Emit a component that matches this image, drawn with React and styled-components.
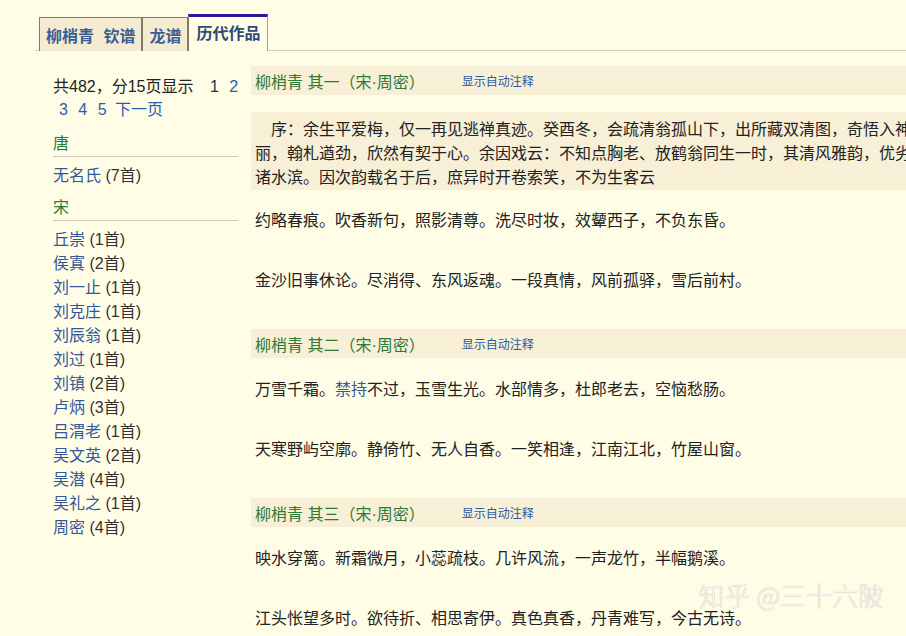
import React from 'react'
import styled, { createGlobalStyle } from 'styled-components'

const colors = {
  page: '#fffde6',
  band: '#f7efd6',
  tab: '#f4ebd0',
  tabBorder: '#84796a',
  active: '#2b1b9b',
  text: '#222',
  link: '#35579a',
  pager: '#2a5db0',
  green: '#2e7a35',
}

const GlobalStyle = createGlobalStyle`
  html, body {
    margin: 0;
    padding: 0;
    overflow: hidden;
    background: ${colors.page};
  }
  body {
    font-family: "Liberation Sans", "Noto Sans CJK SC", sans-serif;
    font-size: 16px;
    color: ${colors.text};
  }
`

const sidebarData = [
  { dynasty: '唐', poets: [{ name: '无名氏', count: 7 }] },
  {
    dynasty: '宋',
    poets: [
      { name: '丘崇', count: 1 },
      { name: '侯寘', count: 2 },
      { name: '刘一止', count: 1 },
      { name: '刘克庄', count: 1 },
      { name: '刘辰翁', count: 1 },
      { name: '刘过', count: 1 },
      { name: '刘镇', count: 2 },
      { name: '卢炳', count: 3 },
      { name: '吕渭老', count: 1 },
      { name: '吴文英', count: 2 },
      { name: '吴潜', count: 4 },
      { name: '吴礼之', count: 1 },
      { name: '周密', count: 4 },
    ],
  },
]

const poems = [
  {
    title: '柳梢青 其一（宋·周密）',
    preface:
      '序：余生平爱梅，仅一再见逃禅真迹。癸酉冬，会疏清翁孤山下，出所藏双清图，奇悟入神，清奇秀丽，翰札遒劲，欣然有契于心。余因戏云：不知点胸老、放鹤翁同生一时，其清风雅韵，优劣莫辨，寄诸水滨。因次韵载名于后，庶异时开卷索笑，不为生客云',
    stanzas: [
      ['约略春痕。吹香新句，照影清尊。洗尽时妆，效颦西子，不负东昏。'],
      ['金沙旧事休论。尽消得、东风返魂。一段真情，风前孤驿，雪后前村。'],
    ],
  },
  {
    title: '柳梢青 其二（宋·周密）',
    stanzas: [
      ['万雪千霜。', { link: '禁持' }, '不过，玉雪生光。水部情多，杜郎老去，空恼愁肠。'],
      ['天寒野屿空廓。静倚竹、无人自香。一笑相逢，江南江北，竹屋山窗。'],
    ],
  },
  {
    title: '柳梢青 其三（宋·周密）',
    stanzas: [
      ['映水穿篱。新霜微月，小蕊疏枝。几许风流，一声龙竹，半幅鹅溪。'],
      ['江头怅望多时。欲待折、相思寄伊。真色真香，丹青难写，今古无诗。'],
    ],
  },
]

const TabBar = styled.nav`
  display: flex;
  align-items: flex-end;
  margin-left: 35px;
  padding: 14px 0 0 4px;
  border-bottom: 1px solid #d3cebb;
`
const Tab = styled.a`
  box-sizing: border-box;
  display: flex;
  align-items: center;
  height: ${p => (p.$active ? '37px' : '34px')};
  margin-bottom: -1px;
  padding: 0 ${p => (p.$active ? '7px' : '6px')} ${p => (p.$active ? '4px' : '0')};
  border: 1px solid ${colors.tabBorder};
  border-bottom: 0;
  border-top: ${p => (p.$active ? `3px solid ${colors.active}` : `1px solid ${colors.tabBorder}`)};
  border-right-color: ${p => (p.$active ? '#a9a292' : colors.tabBorder)};
  background: ${p => (p.$active ? colors.page : colors.tab)};
  color: ${p => (p.$active ? '#2d4a7a' : '#3c5d94')};
  font-weight: ${p => (p.$active ? 700 : 600)};
  font-size: 16px;
  word-spacing: 5px;
  white-space: nowrap;
  cursor: pointer;
`

const Layout = styled.div`
  display: flex;
  align-items: flex-start;
`
const Sidebar = styled.aside`
  flex: 0 0 185px;
  margin-left: 53px;
  padding-top: 24px;
  line-height: 24px;
`
const Pager = styled.div`
  margin-right: -6px;
  padding-bottom: 3px;
  line-height: 23px;
`
const PagerCount = styled.span`
  margin-right: 6px;
`
const PageNum = styled.a`
  margin-left: 6px;
  color: ${p => (p.$current ? '#1f2f55' : colors.pager)};
`
const NextLink = styled.a`
  margin-left: 4px;
  color: ${colors.pager};
`
const DynastyHeading = styled.div`
  margin: 8px 0 7px;
  color: ${colors.green};
  border-bottom: 1px solid #cdcab9;
`
const PoetList = styled.ul`
  list-style: none;
  margin: 0 0 8px;
  padding: 0;
`
const PoetName = styled.a`
  color: ${colors.link};
`
const PoetCount = styled.span`
  color: #333;
`

const Main = styled.main`
  flex: 0 0 730px;
  margin-left: 13px;
  padding-top: 15px;
`
const Poem = styled.section`
  padding-bottom: 3px;
`
const PoemHeader = styled.div`
  display: flex;
  align-items: center;
  height: 29px;
  padding-left: 4px;
  margin-bottom: 17px;
  background: ${colors.band};
`
const PoemTitle = styled.span`
  color: ${colors.green};
  white-space: nowrap;
`
const NoteLink = styled.a`
  margin-left: 37px;
  font-size: 12px;
  color: #2a5aa0;
`
const Preface = styled.p`
  margin: 0 0 16px;
  padding: 6px 4px 0;
  background: ${colors.band};
  text-indent: 1em;
  line-height: 24px;
`
const Stanza = styled.p`
  margin: 0 0 30px;
  padding-left: 4px;
  line-height: 30px;
`
const WordLink = styled.a`
  color: ${colors.link};
`
const Watermark = styled.div`
  position: fixed;
  right: 22px;
  bottom: 23px;
  font-family: "Noto Sans CJK SC", sans-serif;
  font-size: 26px;
  font-weight: 300;
  color: rgba(255, 255, 255, 0.9);
  text-shadow: 0 0 1px rgba(0, 0, 0, 0.45);
  pointer-events: none;
`

const App = () => (
  <>
    <GlobalStyle />
    <TabBar>
      <Tab>柳梢青 钦谱</Tab>
      <Tab>龙谱</Tab>
      <Tab $active>历代作品</Tab>
    </TabBar>

    <Layout>
      <Sidebar>
        <Pager>
          <PagerCount>共482，分15页显示</PagerCount>{' '}
          <PageNum $current>1</PageNum> <PageNum>2</PageNum> <PageNum>3</PageNum>{' '}
          <PageNum>4</PageNum> <PageNum>5</PageNum> <NextLink>下一页</NextLink>
        </Pager>
        {sidebarData.map(group => (
          <div key={group.dynasty}>
            <DynastyHeading>{group.dynasty}</DynastyHeading>
            <PoetList>
              {group.poets.map(poet => (
                <li key={poet.name}>
                  <PoetName>{poet.name}</PoetName> <PoetCount>({poet.count}首)</PoetCount>
                </li>
              ))}
            </PoetList>
          </div>
        ))}
      </Sidebar>

      <Main>
        {poems.map(poem => (
          <Poem key={poem.title}>
            <PoemHeader>
              <PoemTitle>{poem.title}</PoemTitle>
              <NoteLink>显示自动注释</NoteLink>
            </PoemHeader>
            {poem.preface && <Preface>{poem.preface}</Preface>}
            {poem.stanzas.map((parts, i) => (
              <Stanza key={i}>
                {parts.map((part, j) =>
                  typeof part === 'string' ? part : <WordLink key={j}>{part.link}</WordLink>
                )}
              </Stanza>
            ))}
          </Poem>
        ))}
      </Main>
    </Layout>

    <Watermark>知乎 @三十六陂</Watermark>
  </>
)

export default App
